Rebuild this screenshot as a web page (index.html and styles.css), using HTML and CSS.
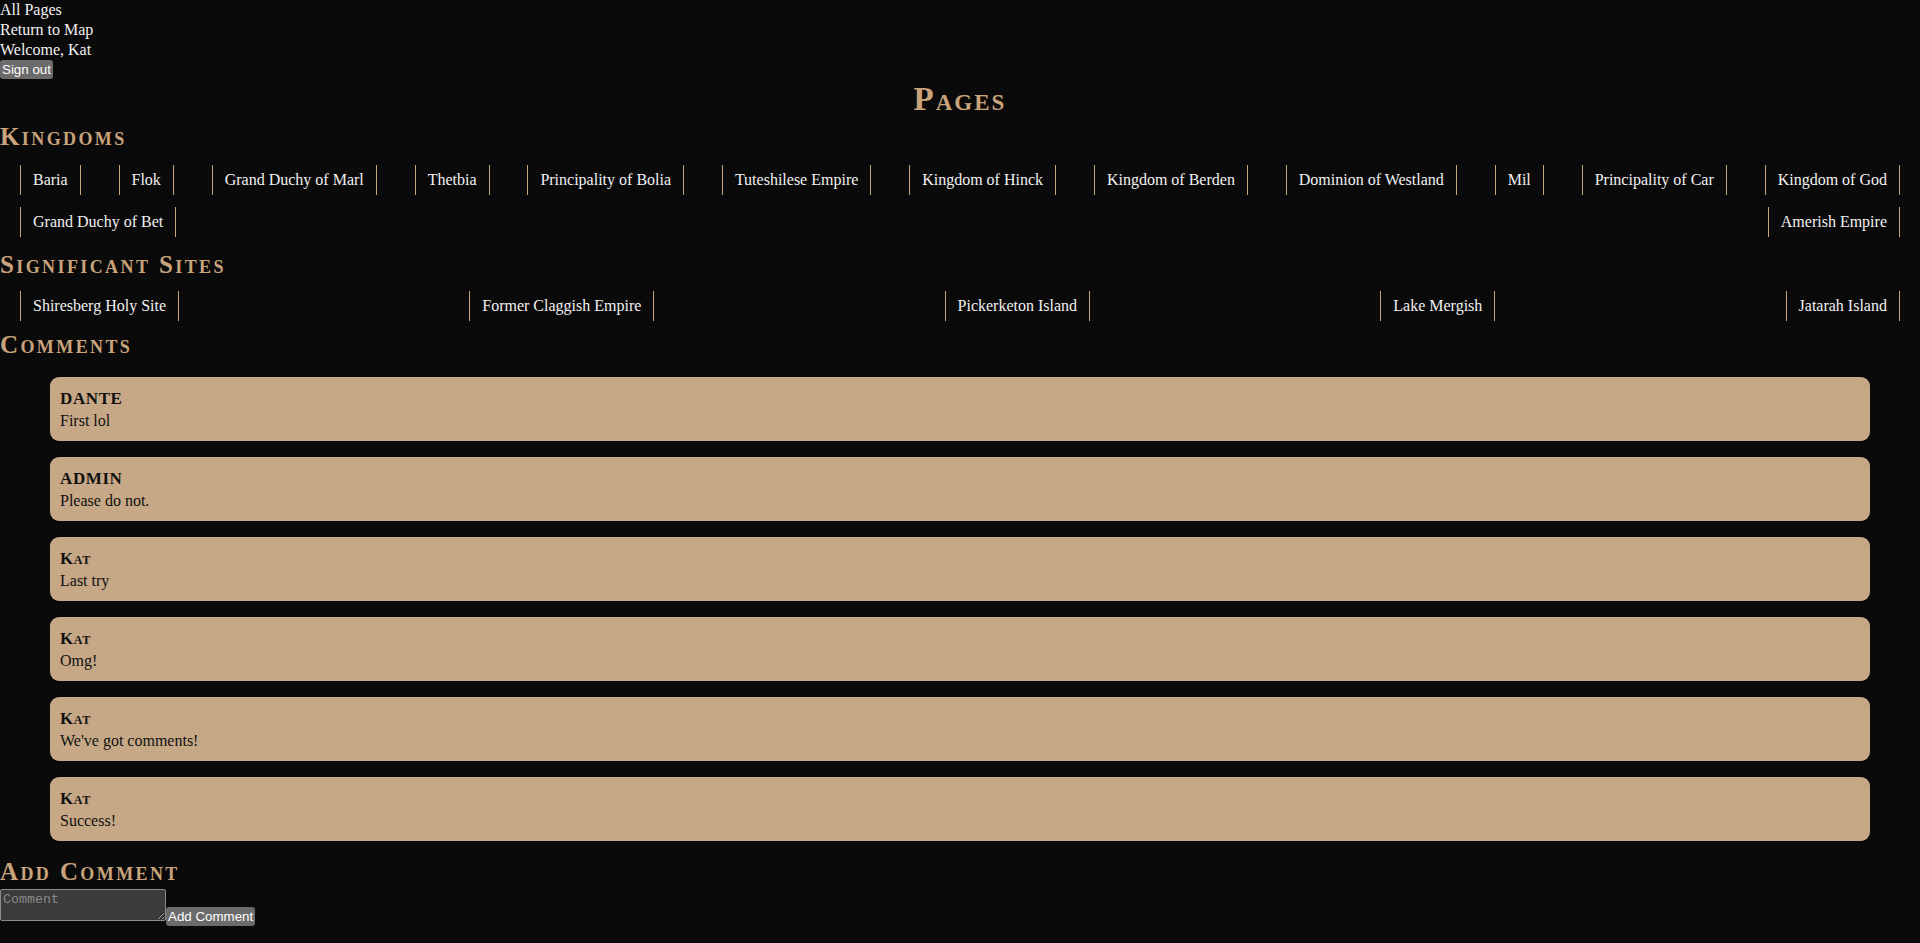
FILE: index.html
```html
<!DOCTYPE html>
<html lang="en">
<head>
<meta charset="utf-8">
<title>Pages</title>
<link rel="stylesheet" href="styles.css">
</head>
<body>
<nav class="topnav">
  <a class="navlink" href="#">All Pages</a>
  <a class="navlink" href="#">Return to Map</a>
  <div class="welcome">Welcome, Kat</div>
  <button class="btn">Sign out</button>
</nav>
<h1 class="page-title">Pages</h1>

<h2 class="section-title">Kingdoms</h2>
<ul class="link-list">
  <li class="link-item"><a href="#">Baria</a></li>
  <li class="link-item"><a href="#">Flok</a></li>
  <li class="link-item"><a href="#">Grand Duchy of Marl</a></li>
  <li class="link-item"><a href="#">Thetbia</a></li>
  <li class="link-item"><a href="#">Principality of Bolia</a></li>
  <li class="link-item"><a href="#">Tuteshilese Empire</a></li>
  <li class="link-item"><a href="#">Kingdom of Hinck</a></li>
  <li class="link-item"><a href="#">Kingdom of Berden</a></li>
  <li class="link-item"><a href="#">Dominion of Westland</a></li>
  <li class="link-item"><a href="#">Mil</a></li>
  <li class="link-item"><a href="#">Principality of Car</a></li>
  <li class="link-item"><a href="#">Kingdom of God</a></li>
  <li class="link-item"><a href="#">Grand Duchy of Bet</a></li>
  <li class="link-item"><a href="#">Amerish Empire</a></li>
</ul>

<h2 class="section-title">Significant Sites</h2>
<ul class="link-list sites-list">
  <li class="link-item"><a href="#">Shiresberg Holy Site</a></li>
  <li class="link-item"><a href="#">Former Claggish Empire</a></li>
  <li class="link-item"><a href="#">Pickerketon Island</a></li>
  <li class="link-item"><a href="#">Lake Mergish</a></li>
  <li class="link-item"><a href="#">Jatarah Island</a></li>
</ul>

<h2 class="section-title">Comments</h2>
<div class="comments">
  <div class="comment"><div class="comment-author">DANTE</div><div class="comment-text">First lol</div></div>
  <div class="comment"><div class="comment-author">ADMIN</div><div class="comment-text">Please do not.</div></div>
  <div class="comment"><div class="comment-author">Kat</div><div class="comment-text">Last try</div></div>
  <div class="comment"><div class="comment-author">Kat</div><div class="comment-text">Omg!</div></div>
  <div class="comment"><div class="comment-author">Kat</div><div class="comment-text">We've got comments!</div></div>
  <div class="comment"><div class="comment-author">Kat</div><div class="comment-text">Success!</div></div>
</div>

<h2 class="section-title add-title">Add Comment</h2>
<form class="add-form"><textarea class="comment-input" placeholder="Comment"></textarea><button class="btn" type="button">Add Comment</button></form>
</body>
</html>
```
FILE: styles.css
```css
html, body {
  margin: 0;
  padding: 0;
  background: #0a0a0a;
}
body {
  font-family: "Liberation Serif", "Times New Roman", serif;
  font-size: 16px;
  line-height: 20px;
  color: #f1f1f1;
}
.topnav {
  display: block;
}
.navlink, .welcome {
  display: block;
  color: #f1f1f1;
  text-decoration: none;
  line-height: 20px;
}
.btn {
  font-family: "Liberation Sans", Arial, sans-serif;
  font-size: 13.33px;
  line-height: 17px;
  background: #6b6b6b;
  color: #ffffff;
  border: 0;
  border-radius: 3px;
  padding: 1px 2px;
  margin: 0;
  cursor: pointer;
  display: inline-block;
}
.topnav .btn {
  display: block;
}
.page-title {
  margin: 0;
  text-align: center;
  font-family: "Liberation Serif", serif;
  font-variant: small-caps;
  font-weight: bold;
  font-size: 33px;
  line-height: 40px;
  letter-spacing: 2px;
  color: #c9a37b;
}
.section-title {
  margin: 0;
  font-family: "Liberation Serif", serif;
  font-variant: small-caps;
  font-weight: bold;
  font-size: 25px;
  line-height: 36px;
  letter-spacing: 2.4px;
  color: #c9a37b;
}
.link-list {
  list-style: none;
  margin: 10px 0;
  padding: 0 20px;
  display: flex;
  flex-wrap: wrap;
  justify-content: space-between;
  column-gap: 22px;
  row-gap: 12px;
}
.sites-list {
  margin: 8px 0 6px;
}
.link-item {
  border-left: 1px solid #c6a37d;
  border-right: 1px solid #c6a37d;
  padding: 5px 12px;
  line-height: 20px;
}
.link-item a {
  color: #f1f1f1;
  text-decoration: none;
}
.comments {
  margin: 14px 50px 13px;
  display: flex;
  flex-direction: column;
  gap: 16px;
}
.comment {
  background: #c6a886;
  border-radius: 9px;
  padding: 11px 10px 10px;
  color: #111;
}
.comment-author {
  font-family: "Liberation Serif", serif;
  font-weight: bold;
  font-variant: small-caps;
  font-size: 17px;
  line-height: 22px;
  letter-spacing: 0.6px;
}
.comment-text {
  line-height: 21px;
}
.add-title {
  line-height: 35px;
}
.add-form {
  margin: 0;
}
.comment-input {
  width: 160px;
  height: 26px;
  background: #3b3b3b;
  border: 1px solid #8c8c8c;
  border-radius: 2px;
  color: #ddd;
  font-family: "Liberation Mono", monospace;
  font-size: 13.33px;
  padding: 2px;
  margin: 0;
  vertical-align: baseline;
}
.comment-input::placeholder {
  color: #8a8a8a;
}
```
